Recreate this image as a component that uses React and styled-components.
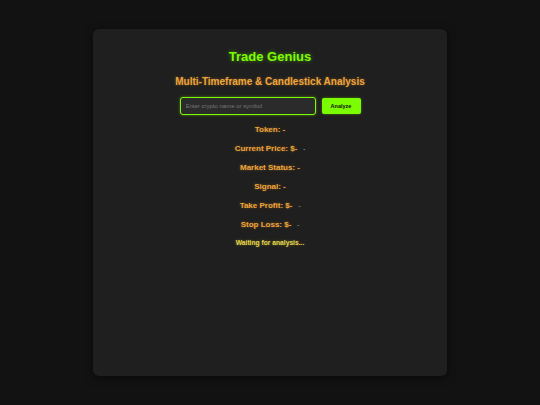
import React from "react";
import styled, { createGlobalStyle } from "styled-components";

const Global = createGlobalStyle`
  html, body { margin: 0; padding: 0; background: #121212; }
  body { font-family: "Liberation Sans", Arial, sans-serif; }
`;

const Page = styled.div`
  width: 540px;
  height: 405px;
  display: flex;
  justify-content: center;
  padding-top: 29px;
  box-sizing: border-box;
`;

const Card = styled.div`
  width: 354px;
  height: 347px;
  box-sizing: border-box;
  background: #1f1f1f;
  border-radius: 6px;
  box-shadow: 0 2px 8px rgba(0, 0, 0, 0.5);
  padding-top: 20px;
  display: flex;
  flex-direction: column;
  align-items: center;
`;

const Title = styled.h1`
  margin: 0;
  font-size: 13px;
  line-height: 16px;
  font-weight: bold;
  color: #7cfc00;
  text-shadow: 0 0 4px rgba(124, 252, 0, 0.45);
`;

const Subtitle = styled.h2`
  margin: 11px 0 0;
  font-size: 10px;
  line-height: 12px;
  font-weight: bold;
  color: #f0a53a;
  text-shadow: 0 0 3px rgba(240, 165, 58, 0.4);
`;

const SearchRow = styled.div`
  margin-top: 9px;
  display: flex;
  align-items: center;
  gap: 6px;
`;

const Input = styled.input`
  width: 136px;
  height: 18px;
  box-sizing: border-box;
  background: #2b2b2b;
  border: 1px solid #7cfc00;
  border-radius: 3px;
  box-shadow: 0 0 3px rgba(124, 252, 0, 0.5);
  padding: 0 5px;
  font-family: "Liberation Sans", Arial, sans-serif;
  font-size: 6px;
  color: #ddd;
  outline: none;
  &::placeholder { color: #777; }
`;

const Button = styled.button`
  width: 39px;
  height: 16px;
  box-sizing: border-box;
  background: #7cfc00;
  border: none;
  border-radius: 2px;
  color: #111;
  font-family: "Liberation Sans", Arial, sans-serif;
  font-size: 5.5px;
  font-weight: bold;
  padding: 0;
  cursor: pointer;
  box-shadow: 0 0 3px rgba(124, 252, 0, 0.4);
`;

const Results = styled.div`
  margin-top: 10px;
  display: flex;
  flex-direction: column;
  align-items: center;
  gap: 9px;
`;

const Row = styled.div`
  font-size: 8px;
  line-height: 10px;
  font-weight: bold;
  color: #f0a53a;
  text-shadow: 0 0 3px rgba(240, 165, 58, 0.4);
  white-space: pre;
`;

const Change = styled.span`
  margin-left: 6px;
  color: #9a9a9a;
  font-size: 6px;
  text-shadow: none;
`;

const Status = styled.div`
  font-size: 6.7px;
  line-height: 8px;
  font-weight: bold;
  color: #e8d84a;
  text-shadow: 0 0 3px rgba(232, 216, 74, 0.4);
`;

export default function App() {
  return (
    <>
      <Global />
      <Page>
        <Card>
          <Title>Trade Genius</Title>
          <Subtitle>Multi-Timeframe &amp; Candlestick Analysis</Subtitle>
          <SearchRow>
            <Input placeholder="Enter crypto name or symbol" />
            <Button>Analyze</Button>
          </SearchRow>
          <Results>
            <Row>Token: -</Row>
            <Row>Current Price: $-<Change>-</Change></Row>
            <Row>Market Status: -</Row>
            <Row>Signal: -</Row>
            <Row>Take Profit: $-<Change>-</Change></Row>
            <Row>Stop Loss: $-<Change>-</Change></Row>
            <Status>Waiting for analysis...</Status>
          </Results>
        </Card>
      </Page>
    </>
  );
}
